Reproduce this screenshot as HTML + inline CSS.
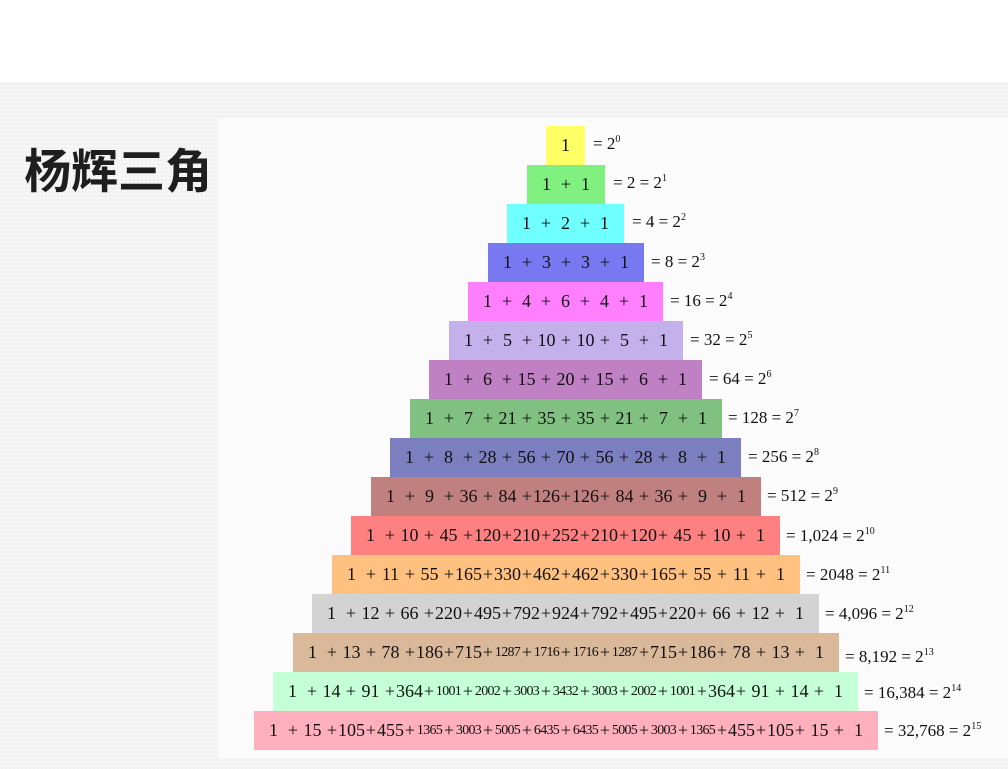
<!DOCTYPE html>
<html><head><meta charset="utf-8"><style>
html,body{margin:0;padding:0}
body{width:1008px;height:769px;position:relative;overflow:hidden;background:#fff;font-family:"Liberation Serif",serif}
.bg{position:absolute;left:0;top:82px;width:1008px;height:687px;background-color:#f6f6f6;background-image:radial-gradient(#ececec 0.8px,transparent 0.9px);background-size:4px 4px}
.img{position:absolute;left:218px;top:118px;width:790px;height:640px;background:#fbfbfb}
h1{position:absolute;left:24px;top:145px;margin:0;font:bold 47px/54px "Liberation Sans","Noto Sans CJK SC",sans-serif;color:#1e1e1e;letter-spacing:0px}
.r{position:absolute;height:39px;display:flex;align-items:center;font-size:18px;color:#111}
.r span{display:inline-block;width:39px;text-align:center}
.r i{font-style:normal;display:inline-flex;justify-content:center;width:0;overflow:visible}
.r span.s{font-size:14px;letter-spacing:-0.7px}
.l{position:absolute;font-size:17px;color:#111;line-height:39px;height:39px;white-space:nowrap}
.l sup{font-size:10px;position:relative;top:-7px;vertical-align:baseline;line-height:0}
</style></head><body>
<div class="bg"></div><div class="img"></div>
<h1>杨辉三角</h1>

<div class="r" style="left:546px;top:126px;background:#ffff66"><span>1</span></div>
<div class="l" style="left:593px;top:124px">= 2<sup>0</sup></div>

<div class="r" style="left:527px;top:165px;background:#80f080"><span>1</span><i>+</i><span>1</span></div>
<div class="l" style="left:613px;top:163px">= 2 = 2<sup>1</sup></div>

<div class="r" style="left:507px;top:204px;background:#70ffff"><span>1</span><i>+</i><span>2</span><i>+</i><span>1</span></div>
<div class="l" style="left:632px;top:202px">= 4 = 2<sup>2</sup></div>

<div class="r" style="left:488px;top:243px;background:#7878f0"><span>1</span><i>+</i><span>3</span><i>+</i><span>3</span><i>+</i><span>1</span></div>
<div class="l" style="left:651px;top:242px">= 8 = 2<sup>3</sup></div>

<div class="r" style="left:468px;top:282px;background:#ff7fff"><span>1</span><i>+</i><span>4</span><i>+</i><span>6</span><i>+</i><span>4</span><i>+</i><span>1</span></div>
<div class="l" style="left:670px;top:281px">= 16 = 2<sup>4</sup></div>

<div class="r" style="left:449px;top:321px;background:#c4b0ea"><span>1</span><i>+</i><span>5</span><i>+</i><span>10</span><i>+</i><span>10</span><i>+</i><span>5</span><i>+</i><span>1</span></div>
<div class="l" style="left:690px;top:320px">= 32 = 2<sup>5</sup></div>

<div class="r" style="left:429px;top:360px;background:#c080c4"><span>1</span><i>+</i><span>6</span><i>+</i><span>15</span><i>+</i><span>20</span><i>+</i><span>15</span><i>+</i><span>6</span><i>+</i><span>1</span></div>
<div class="l" style="left:709px;top:359px">= 64 = 2<sup>6</sup></div>

<div class="r" style="left:410px;top:399px;background:#80c080"><span>1</span><i>+</i><span>7</span><i>+</i><span>21</span><i>+</i><span>35</span><i>+</i><span>35</span><i>+</i><span>21</span><i>+</i><span>7</span><i>+</i><span>1</span></div>
<div class="l" style="left:728px;top:398px">= 128 = 2<sup>7</sup></div>

<div class="r" style="left:390px;top:438px;background:#7b7fc0"><span>1</span><i>+</i><span>8</span><i>+</i><span>28</span><i>+</i><span>56</span><i>+</i><span>70</span><i>+</i><span>56</span><i>+</i><span>28</span><i>+</i><span>8</span><i>+</i><span>1</span></div>
<div class="l" style="left:748px;top:437px">= 256 = 2<sup>8</sup></div>

<div class="r" style="left:371px;top:477px;background:#c08080"><span>1</span><i>+</i><span>9</span><i>+</i><span>36</span><i>+</i><span>84</span><i>+</i><span>126</span><i>+</i><span>126</span><i>+</i><span>84</span><i>+</i><span>36</span><i>+</i><span>9</span><i>+</i><span>1</span></div>
<div class="l" style="left:767px;top:476px">= 512 = 2<sup>9</sup></div>

<div class="r" style="left:351px;top:516px;background:#ff8080"><span>1</span><i>+</i><span>10</span><i>+</i><span>45</span><i>+</i><span>120</span><i>+</i><span>210</span><i>+</i><span>252</span><i>+</i><span>210</span><i>+</i><span>120</span><i>+</i><span>45</span><i>+</i><span>10</span><i>+</i><span>1</span></div>
<div class="l" style="left:786px;top:516px">= 1,024 = 2<sup>10</sup></div>

<div class="r" style="left:332px;top:555px;background:#ffc080"><span>1</span><i>+</i><span>11</span><i>+</i><span>55</span><i>+</i><span>165</span><i>+</i><span>330</span><i>+</i><span>462</span><i>+</i><span>462</span><i>+</i><span>330</span><i>+</i><span>165</span><i>+</i><span>55</span><i>+</i><span>11</span><i>+</i><span>1</span></div>
<div class="l" style="left:806px;top:555px">= 2048 = 2<sup>11</sup></div>

<div class="r" style="left:312px;top:594px;background:#d3d3d3"><span>1</span><i>+</i><span>12</span><i>+</i><span>66</span><i>+</i><span>220</span><i>+</i><span>495</span><i>+</i><span>792</span><i>+</i><span>924</span><i>+</i><span>792</span><i>+</i><span>495</span><i>+</i><span>220</span><i>+</i><span>66</span><i>+</i><span>12</span><i>+</i><span>1</span></div>
<div class="l" style="left:825px;top:594px">= 4,096 = 2<sup>12</sup></div>

<div class="r" style="left:293px;top:633px;background:#d9b99a"><span>1</span><i>+</i><span>13</span><i>+</i><span>78</span><i>+</i><span>186</span><i>+</i><span>715</span><i>+</i><span class="s">1287</span><i>+</i><span class="s">1716</span><i>+</i><span class="s">1716</span><i>+</i><span class="s">1287</span><i>+</i><span>715</span><i>+</i><span>186</span><i>+</i><span>78</span><i>+</i><span>13</span><i>+</i><span>1</span></div>
<div class="l" style="left:845px;top:637px">= 8,192 = 2<sup>13</sup></div>

<div class="r" style="left:273px;top:672px;background:#c4ffd8"><span>1</span><i>+</i><span>14</span><i>+</i><span>91</span><i>+</i><span>364</span><i>+</i><span class="s">1001</span><i>+</i><span class="s">2002</span><i>+</i><span class="s">3003</span><i>+</i><span class="s">3432</span><i>+</i><span class="s">3003</span><i>+</i><span class="s">2002</span><i>+</i><span class="s">1001</span><i>+</i><span>364</span><i>+</i><span>91</span><i>+</i><span>14</span><i>+</i><span>1</span></div>
<div class="l" style="left:864px;top:673px">= 16,384 = 2<sup>14</sup></div>

<div class="r" style="left:254px;top:711px;background:#ffb0bc"><span>1</span><i>+</i><span>15</span><i>+</i><span>105</span><i>+</i><span>455</span><i>+</i><span class="s">1365</span><i>+</i><span class="s">3003</span><i>+</i><span class="s">5005</span><i>+</i><span class="s">6435</span><i>+</i><span class="s">6435</span><i>+</i><span class="s">5005</span><i>+</i><span class="s">3003</span><i>+</i><span class="s">1365</span><i>+</i><span>455</span><i>+</i><span>105</span><i>+</i><span>15</span><i>+</i><span>1</span></div>
<div class="l" style="left:884px;top:711px">= 32,768 = 2<sup>15</sup></div>
</body></html>
